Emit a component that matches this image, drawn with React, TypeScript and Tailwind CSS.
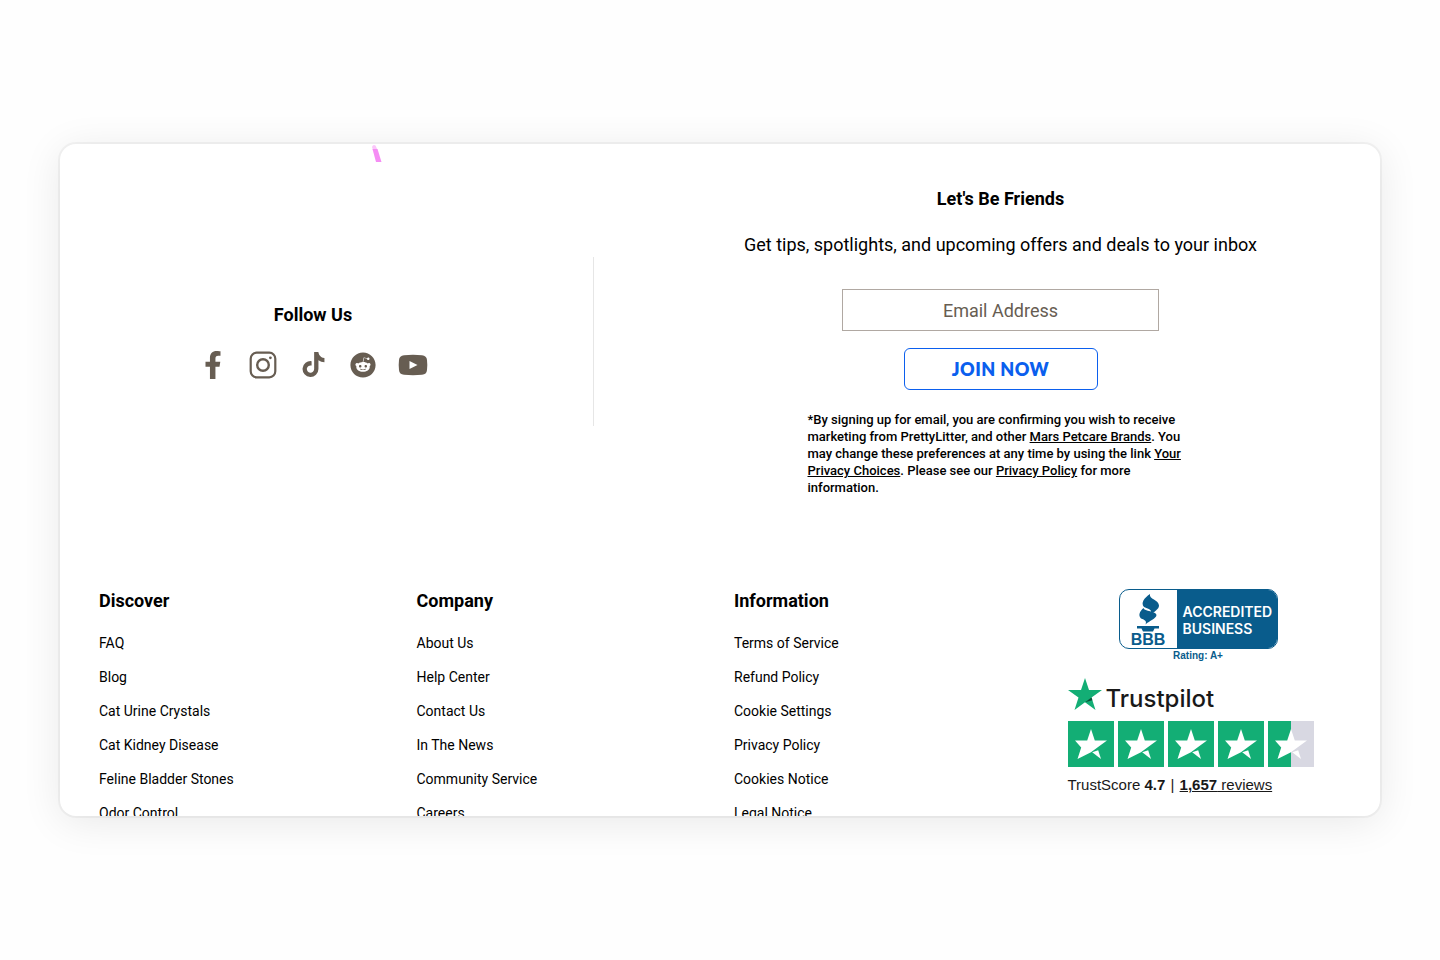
import React from 'react'
import { FaFacebookF, FaReddit, FaTiktok } from 'react-icons/fa'

const discoverLinks = ['FAQ', 'Blog', 'Cat Urine Crystals', 'Cat Kidney Disease', 'Feline Bladder Stones', 'Odor Control']
const companyLinks = ['About Us', 'Help Center', 'Contact Us', 'In The News', 'Community Service', 'Careers']
const informationLinks = ['Terms of Service', 'Refund Policy', 'Cookie Settings', 'Privacy Policy', 'Cookies Notice', 'Legal Notice']

const InstagramIcon = () => (
    <svg width="28" height="28" viewBox="0 0 28 28" fill="none" aria-hidden="true">
        <rect x="1.7" y="1.7" width="24.6" height="24.6" rx="6" stroke="currentColor" strokeWidth="2.2" />
        <circle cx="14" cy="14" r="5.8" stroke="currentColor" strokeWidth="2.4" />
        <circle cx="21.4" cy="6.8" r="1.4" fill="currentColor" />
    </svg>
)

const YoutubeIcon = () => (
    <svg width="30" height="22" viewBox="0 0 30 22" aria-hidden="true">
        <path d="M6 1.2Q15 .4 24 1.2Q28.6 1.6 29 6Q29.6 11 29 16Q28.6 20.4 24 20.8Q15 21.6 6 20.8Q1.4 20.4 1 16Q.4 11 1 6Q1.4 1.6 6 1.2Z" fill="currentColor" />
        <path d="M11.5 7L19.5 11L11.5 15Z" fill="#fff" />
    </svg>
)

const socials = [
    { name: 'Facebook', icon: <FaFacebookF size={28} /> },
    { name: 'Instagram', icon: <InstagramIcon /> },
    { name: 'TikTok', icon: <FaTiktok size={25} /> },
    { name: 'Reddit', icon: <FaReddit size={26} /> },
    { name: 'YouTube', icon: <YoutubeIcon /> },
]

const LinkColumn = ({ title, links }: { title: string, links: string[] }) => (
    <nav aria-label={title}>
        <h2 className="text-[18px] leading-6 font-bold">{title}</h2>
        <ul className="mt-5 space-y-[14px]">
            {links.map((link) => (
                <li key={link} className="text-[14px] leading-5">
                    <a href="#">{link}</a>
                </li>
            ))}
        </ul>
    </nav>
)

const BbbBadge = () => (
    <a href="#" aria-label="BBB Accredited Business" className="flex flex-col items-center text-[#095c8c]">
        <span className="flex h-[60px] w-[159px] overflow-hidden rounded-[10px] border border-[#095c8c]">
            <span className="flex w-[57px] flex-col items-center pt-1">
                <svg width="26" height="38" viewBox="0 0 26 38" fill="currentColor" aria-hidden="true">
                    <path d="M15 0C13.5 5 24 6 24 11.5C24 15.500 19 17.500 15 21.500C17.500 16.500 16 15.500 9 13C5.500 9 9 4 15 0Z" />
                    <path d="M8.5 14C9 17.5 21.500 17 21.500 21C21 25 14.500 26.500 10.500 30.500C12 27 10 26 6 24.500C3 21.500 4.500 17.500 8.500 14Z" />
                    <path d="M2 32H24V34.5H19.5L18 37.5H8L6.5 34.500H2Z" />
                </svg>
                <span className="font-['Liberation_Sans'] text-[16px] leading-4 font-bold">BBB</span>
            </span>
            <span className="flex flex-1 flex-col justify-center bg-[#095c8c] pt-[2px] pl-[6px] font-['Inter'] text-[14px] leading-[17px] font-semibold text-white">
                <span>ACCREDITED</span>
                <span>BUSINESS</span>
            </span>
        </span>
        <span className="font-['Liberation_Sans'] text-[10px] leading-[14px] font-bold">Rating: A+</span>
    </a>
)

const TrustStar = ({ half }: { half?: boolean }) => (
    <svg width="46" height="46" viewBox="0 0 46 46" aria-hidden="true">
        <rect width="46" height="46" fill={half ? '#d8d8e2' : '#13ae75'} />
        {half && <rect width="23" height="46" fill="#13ae75" />}
        <path d="M23 8L26.8 19.5H39L29.4 26.6L23 31.2L9.500 38L13.2 26.5L7 19.500H19.2Z" fill="#fff" />
        <path d="M24.2 31.2L30.2 29.2L33 38Z" fill="#fff" />
    </svg>
)

const Trustpilot = () => (
    <div className="mt-[14px] font-['Liberation_Sans'] text-[#191919]">
        <a href="#" className="flex h-[36px] items-start">
            <svg width="34" height="34" viewBox="0 0 34 34" aria-hidden="true">
                <path d="M17 1L21 13H34L23.5 20.5L27.5 33L17 25.3L6.5 33L10.5 20.5L0 13H13Z" fill="#13ae75" />
                <path d="M24.4 23.3L23.5 20.5L17 25.3Z" fill="#0b5138" />
            </svg>
            <span className="ml-1 pt-1 font-['Inter'] text-[24px] leading-9 font-medium">Trustpilot</span>
        </a>
        <div className="mt-2 flex gap-1">
            <TrustStar />
            <TrustStar />
            <TrustStar />
            <TrustStar />
            <TrustStar half />
        </div>
        <p className="mt-2 text-[15px] leading-5">
            TrustScore <b>4.7</b> <span className="mx-px">|</span> <a href="#" className="underline"><b>1,657</b> reviews</a>
        </p>
    </div>
)

const App = () => {
    return (
        <main className="flex min-h-screen items-center bg-[#fefefe] px-[60px] font-['Roboto',sans-serif] text-black">
            <footer className="relative h-[70vh] w-full overflow-hidden rounded-2xl bg-white shadow-[0_0_0_2px_rgba(0,0,0,0.04),0_6px_40px_rgba(0,0,0,0.09)]">
                <svg className="absolute top-0 left-[311px]" width="11" height="18" viewBox="0 0 11 18" aria-hidden="true">
                    <path d="M1 3Q2 0 4.5 1.5L6.5 6H2Z" fill="#fbc6fa" />
                    <path d="M1.5 5L6.5 5L10.5 18H5Z" fill="#f58df4" />
                </svg>

                <div className="grid grid-cols-[534fr_786fr] items-center pt-[43px]">
                    <section className="flex h-[169px] flex-col items-center justify-center border-r border-[#e6e6e6] pr-[27px]">
                        <h2 className="text-[18px] leading-6 font-bold">Follow Us</h2>
                        <ul className="mt-[22px] flex text-[#675d52]">
                            {socials.map(({ name, icon }) => (
                                <li key={name}>
                                    <a href="#" aria-label={name} className="flex h-8 w-[50px] items-center justify-center">{icon}</a>
                                </li>
                            ))}
                        </ul>
                    </section>

                    <section className="flex flex-col items-center pl-[27px]">
                        <h2 className="text-[18px] leading-6 font-bold">Let's Be Friends</h2>
                        <p className="mt-[22px] text-[18px] leading-6">Get tips, spotlights, and upcoming offers and deals to your inbox</p>
                        <form className="mt-8 flex flex-col items-center" onSubmit={(e) => e.preventDefault()}>
                            <input
                                type="email"
                                aria-label="Email Address"
                                placeholder="Email Address"
                                className="h-[42px] w-[317px] border border-[#b0a8a2] text-center text-[18px] placeholder:text-[#675d52]"
                            />
                            <button type="submit" className="mt-[17px] h-[42px] w-[194px] rounded-md border border-[#0b5fee] font-['Lato'] text-[18px] font-extrabold tracking-wide text-[#0b5fee]">
                                JOIN NOW
                            </button>
                        </form>
                        <p className="mt-[21px] w-[386px] text-[13px] leading-[17px] font-medium">
                            *By signing up for email, you are confirming you wish to receive marketing from PrettyLitter, and other <a href="#" className="underline">Mars Petcare Brands</a>. You may change these preferences at any time by using the link <a href="#" className="underline">Your Privacy Choices</a>. Please see our <a href="#" className="underline">Privacy Policy</a> for more information.
                        </p>
                    </section>
                </div>

                <div className="mt-[93px] grid grid-cols-4 pr-[11px] pl-[39px]">
                    <LinkColumn title="Discover" links={discoverLinks} />
                    <LinkColumn title="Company" links={companyLinks} />
                    <LinkColumn title="Information" links={informationLinks} />
                    <div className="w-[277px] pl-4">
                        <BbbBadge />
                        <Trustpilot />
                    </div>
                </div>
            </footer>
        </main>
    )
}

export default App
